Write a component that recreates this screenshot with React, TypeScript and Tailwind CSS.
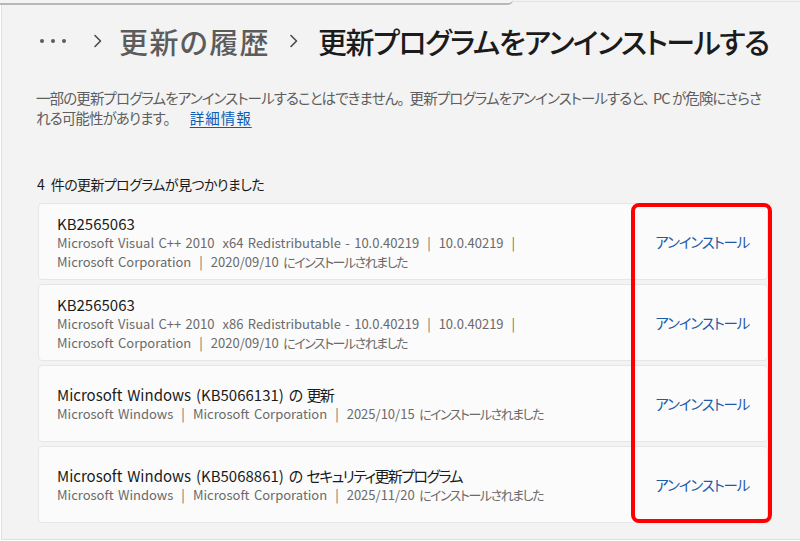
import React from "react";

const base = "[font-family:'Segoe_UI','Noto_Sans_CJK_JP',sans-serif] [font-feature-settings:'palt']";

const JRE = /([\u3000-\u30ff\u4e00-\u9fff\uff00-\uffef]+)/;

function J({ text, cls }: { text: string; cls: string }) {
  const parts = text.split(JRE);
  return (
    <>
      {parts.map((p, i) =>
        JRE.test(p) ? (
          <span key={i} className={cls}>
            {p}
          </span>
        ) : (
          <span key={i} className="[word-spacing:1.5px]">{p}</span>
        )
      )}
    </>
  );
}

type Item = { title: string; lines: string[][] };

const items: Item[] = [
  {
    title: "KB2565063",
    lines: [
      ["Microsoft Visual C++ 2010@x64 Redistributable - 10.0.40219", "10.0.40219", ""],
      ["Microsoft Corporation", "2020/09/10 にインストールされました"],
    ],
  },
  {
    title: "KB2565063",
    lines: [
      ["Microsoft Visual C++ 2010@x86 Redistributable - 10.0.40219", "10.0.40219", ""],
      ["Microsoft Corporation", "2020/09/10 にインストールされました"],
    ],
  },
  {
    title: "Microsoft Windows (KB5066131) の 更新",
    lines: [["Microsoft Windows", "Microsoft Corporation", "2025/10/15 にインストールされました"]],
  },
  {
    title: "Microsoft Windows (KB5068861) の セキュリティ更新プログラム",
    lines: [["Microsoft Windows", "Microsoft Corporation", "2025/11/20 にインストールされました"]],
  },
];

function Seg({ s }: { s: string }) {
  const [a, b] = s.split("@");
  if (b === undefined) return <J text={a} cls="tracking-[-1.5px]" />;
  return (
    <>
      <J text={a} cls="tracking-[-1.5px]" />
      <span className="inline-block w-[8px]" />
      <J text={b} cls="tracking-[-1.5px]" />
    </>
  );
}

function Chevron() {
  return (
    <svg width="10" height="16" viewBox="0 0 10 16" className="shrink-0">
      <path d="M2 2.5 L7.5 8 L2 13.5" fill="none" stroke="#4a4a4a" strokeWidth="1.6" strokeLinecap="round" strokeLinejoin="round" />
    </svg>
  );
}

export default function App() {
  return (
    <div className={`w-[800px] h-[541px] bg-white overflow-hidden flex flex-col ${base}`}>
      <div className="flex h-[5px] shrink-0 bg-[#f3f3f3]">
        <div className="w-[513px] h-[5px] border-b-2 border-[#b8b8b8] rounded-br-[6px]" />
        <div className="flex-1 h-[2px] border-b border-[#e2e2e2]" />
      </div>
      <div className="h-[535px] bg-[#f3f3f3] border-l border-b border-[#e0e0e0] ml-[1px] pl-[36px] pt-[18px]">
        <div className="flex items-center h-[36px] text-[29px] leading-[36px]">
          <svg width="30" height="8" viewBox="0 0 30 8" className="shrink-0 ml-[1px]">
            <circle cx="3" cy="4" r="2" fill="#5c5c5c" />
            <circle cx="14" cy="4" r="2" fill="#5c5c5c" />
            <circle cx="25" cy="4" r="2" fill="#5c5c5c" />
          </svg>
          <div className="w-[24px]" />
          <Chevron />
          <span className="ml-[16px] text-[#5c5c5c] font-medium tracking-[1.4px]">更新の履歴</span>
          <div className="w-[19px]" />
          <Chevron />
          <span className="ml-[19px] text-[#1b1b1b] font-medium whitespace-nowrap tracking-[-1.4px]">更新プログラムをアンインストールする</span>
        </div>
        <div className="mt-[29px] ml-[-2px] w-[728px] text-[14.5px] leading-[20px] text-[#5e5e5e] tracking-[-0.9px]">
          一部の更新プログラムをアンインストールすることはできません。<span className="inline-block w-[6px]" />更新プログラムをアンインストールすると、<span className="inline-block w-[4px]" />PC が危険にさらされる可能性があります。
          <span className="inline-block w-[20px]" />
          <span className="text-[#0a5cb6] underline underline-offset-[3px] tracking-[1px]">詳細情報</span>
        </div>
        <div className="mt-[46px] ml-[-1px] text-[14px] leading-[20px] text-[#1b1b1b] tracking-[-0.6px] [word-spacing:4px]">4 件の更新プログラムが見つかりました</div>
        <div className="relative mt-[9px] w-[730px] flex flex-col gap-[4px]">
          {items.map((it, i) => (
            <div
              key={i}
              className="h-[77px] bg-[#fbfbfb] border border-[#e6e6e6] rounded-[4px] flex items-center justify-between pl-[18px] pr-[18px]"
            >
              <div className="flex flex-col pt-[2px]">
                <div className="text-[15px] leading-[18px] text-[#1b1b1b]">
                  <J text={it.title} cls="tracking-[-1.6px]" />
                </div>
                {it.lines.map((l, j) => (
                  <div key={j} className="text-[13px] leading-[19px] text-[#6a6a6a] whitespace-nowrap">
                    {l.map((s, k) => (
                      <React.Fragment key={k}>
                        {k > 0 && <span className="px-[8px]">|</span>}
                        <Seg s={s} />
                      </React.Fragment>
                    ))}
                  </div>
                ))}
              </div>
              <div className="text-[14.5px] text-[#1f5aa8] tracking-[-1.2px]">アンインストール</div>
            </div>
          ))}
          <div className="absolute left-[593px] top-0 w-[141px] h-[320px] border-[4px] border-[#ff0000] rounded-[8px]" />
        </div>
      </div>
    </div>
  );
}
